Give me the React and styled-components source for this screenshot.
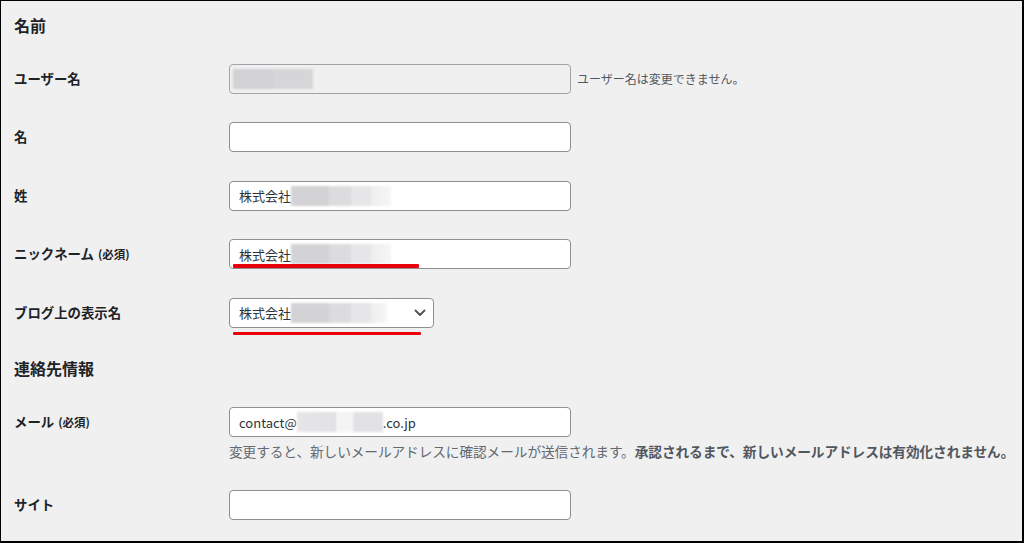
import React from "react";
import styled, { createGlobalStyle } from "styled-components";

const Global = createGlobalStyle`
  html, body { margin: 0; padding: 0; background: #f0f0f1; }
  body { font-family: "Noto Sans CJK JP", "Noto Sans", sans-serif; color: #1d2327; }
  * { box-sizing: border-box; }
`;

const Frame = styled.div`
  width: 1024px;
  height: 543px;
  overflow: hidden;
  background: #f0f0f1;
  border-style: solid;
  border-color: #000;
  border-width: 1px 2px 2px 1px;
  padding: 14px 0 0 13px;
`;

const Heading = styled.h2`
  margin: ${(p) => p.$top || 0}px 0 14.5px 0;
  font-size: 16px;
  line-height: 20px;
  font-weight: 700;
  color: #1d2327;
`;

const Row = styled.div`
  display: grid;
  grid-template-columns: 215px 1fr;
  align-items: start;
  padding: ${(p) => p.$pt ?? 14.25}px 0 ${(p) => p.$pb ?? 14.25}px 0;
`;

const Label = styled.div`
  font-size: 13.4px;
  line-height: 29px;
  font-weight: 700;
  color: #1d2327;
  white-space: nowrap;
`;

const Required = styled.span`
  font-size: 11.5px;
  font-weight: 700;
  margin-left: 4px;
`;

const Field = styled.div`
  display: flex;
  align-items: center;
  gap: 6px;
  position: relative;
`;

const TextBox = styled.div`
  width: ${(p) => p.$w || 342}px;
  height: 30px;
  border: 1px solid ${(p) => (p.$disabled ? "#a0a3a7" : "#8c8f94")};
  border-radius: 4px;
  background: ${(p) => (p.$disabled ? "#f0f0f1" : "#fff")};
  padding: 0 8px 0 9px;
  display: flex;
  align-items: center;
  font-size: 13px;
  color: #2c3338;
  position: relative;
  flex: none;
`;

const Blur = styled.span`
  display: inline-block;
  height: 20px;
  width: ${(p) => p.$w}px;
  margin-left: ${(p) => p.$ml || 0}px;
  background: ${(p) => p.$bg};
  filter: blur(1.2px);
  flex: none;
`;

const Note = styled.span`
  font-size: 12px;
  color: #50575e;
  white-space: nowrap;
`;

const Description = styled.p`
  margin: 5px 0 0 0;
  font-size: 13.7px;
  line-height: 18px;
  color: #646970;
  white-space: nowrap;
  letter-spacing: -0.1px;
  b { color: #50575e; font-weight: 700; }
`;

const Chevron = styled.svg`
  position: absolute;
  right: 7px;
  top: 50%;
  transform: translateY(-50%);
`;

const Underline = styled.div`
  position: absolute;
  left: 4px;
  top: ${(p) => p.$top}px;
  width: ${(p) => p.$w}px;
  height: 3.5px;
  background: #e8000b;
  border-radius: 1px;
`;

const FieldCol = styled.div`
  display: flex;
  flex-direction: column;
`;

const grayA =
  "linear-gradient(90deg, #d3d3d5 0, #d3d3d5 38px, #dcdcde 38px, #dcdcde 60px, #e6e6e8 60px, #e6e6e8 80px, #eeeeef 80px, #f6f6f7 100%)";
const grayUser =
  "linear-gradient(90deg, #d2d2d4 0, #d2d2d4 40px, #d6d6d8 40px, #d6d6d8 80px)";
const grayMail1 = "linear-gradient(90deg, #e6e6e8 0, #e2e2e4 100%)";

export default function App() {
  return (
    <>
      <Global />
      <Frame>
        <Heading>名前</Heading>

        <Row>
          <Label>ユーザー名</Label>
          <Field>
            <TextBox $disabled style={{ paddingLeft: 3 }}>
              <Blur $w={80} $bg={grayUser} />
            </TextBox>
            <Note>ユーザー名は変更できません。</Note>
          </Field>
        </Row>

        <Row>
          <Label>名</Label>
          <Field>
            <TextBox />
          </Field>
        </Row>

        <Row>
          <Label>姓</Label>
          <Field>
            <TextBox>
              株式会社
              <Blur $w={100} $bg={grayA} />
            </TextBox>
          </Field>
        </Row>

        <Row>
          <Label>
            ニックネーム<Required>(必須)</Required>
          </Label>
          <Field>
            <TextBox>
              株式会社
              <Blur $w={100} $bg={grayA} />
            </TextBox>
            <Underline $top={25} $w={186} />
          </Field>
        </Row>

        <Row>
          <Label>ブログ上の表示名</Label>
          <Field>
            <TextBox $w={205}>
              株式会社
              <Blur $w={96} $bg={grayA} />
              <Chevron width="12" height="8" viewBox="0 0 12 8" fill="none">
                <path d="M1.5 1.5 L6 6 L10.5 1.5" stroke="#50575e" strokeWidth="2" strokeLinecap="round" strokeLinejoin="round" />
              </Chevron>
            </TextBox>
            <Underline $top={34} $w={188} />
          </Field>
        </Row>

        <Heading $top={15.75}>連絡先情報</Heading>

        <Row $pt={15}>
          <Label>
            メール<Required>(必須)</Required>
          </Label>
          <FieldCol>
            <TextBox>
              contact@
              <Blur $w={40} $bg={grayMail1} />
              <Blur $w={16} $bg="#f4f4f5" />
              <Blur $w={30} $bg="#e2e2e4" />
              .co.jp
            </TextBox>
            <Description>
              変更すると、新しいメールアドレスに確認メールが送信されます。
              <b>承認されるまで、新しいメールアドレスは有効化されません。</b>
            </Description>
          </FieldCol>
        </Row>

        <Row $pt={15}>
          <Label>サイト</Label>
          <Field>
            <TextBox />
          </Field>
        </Row>
      </Frame>
    </>
  );
}
